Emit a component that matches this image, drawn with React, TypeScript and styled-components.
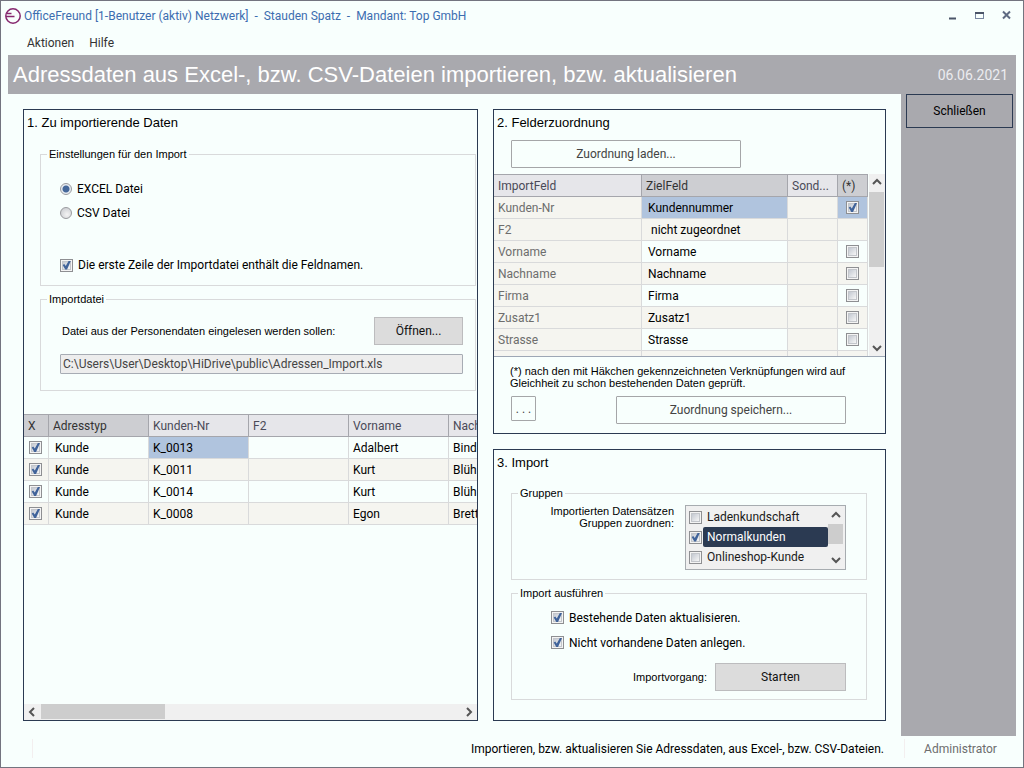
import React from "react";
import styled, { createGlobalStyle } from "styled-components";

const ui = `Roboto, "Open Sans", "Noto Sans", sans-serif`;
const sans = `"Liberation Sans", Arial, sans-serif`;

const c = {
  page: "#f8fffd",
  navy: "#2b3a52",
  band: "#a9a9ae",
  line: "#d9dadb",
  cell: "#f5f5f0",
  head: "#e6e6ea",
  headDark: "#cdced2",
  headLine: "#a5a6ac",
  select: "#b0c4de",
};

const Global = createGlobalStyle`
  *, *::before, *::after { box-sizing: border-box; }
  body { margin: 0; background: ${c.page}; color: #000; font: 12px/16px ${ui}; }
  button, input { font: inherit; }
`;

const Window = styled.div`
  display: flex;
  flex-direction: column;
  min-height: 100vh;
  border: 1px solid #73747f;
  background: ${c.page};
`;

const TitleBar = styled.header`
  display: flex;
  align-items: center;
  height: 29px;
  padding: 0 8px 0 4px;
  color: #3c6db0;
  white-space: pre;
`;

const Title = styled.span`
  flex: 1;
  padding-left: 3px;
`;

const WindowButtons = styled.div`
  display: flex;
  gap: 11px;
`;

const WindowButton = styled.button`
  display: flex;
  width: 16px;
  height: 16px;
  padding: 0;
  border: 0;
  background: none;
`;

const MenuBar = styled.nav`
  display: flex;
  gap: 15px;
  height: 25px;
  padding: 0 26px;
  align-items: center;
`;

const MenuLink = styled.a`
  color: #333;
  text-decoration: none;
`;

const Banner = styled.div`
  display: flex;
  align-items: center;
  justify-content: space-between;
  height: 39px;
  margin: 0 7px;
  padding: 0 8px 0 5px;
  background: ${c.band};
  color: #fff;
`;

const BannerTitle = styled.h1`
  margin: 0;
  font: 22px/24px ${sans};
`;

const BannerDate = styled.time`
  font-size: 14px;
  color: #ececf0;
`;

const Body = styled.div`
  flex: 1;
  display: flex;
  margin: 0 7px;
`;

const Main = styled.main`
  flex: 1;
  min-width: 0;
  display: grid;
  grid-template-columns: minmax(0, 455fr) minmax(0, 393fr);
  gap: 15px;
  padding: 15px;
`;

const Column = styled.div`
  display: flex;
  flex-direction: column;
  gap: 15px;
`;

const Panel = styled.section<{ $grow?: boolean }>`
  display: flex;
  flex-direction: column;
  flex: ${(p) => (p.$grow ? 1 : "none")};
  min-width: 0;
  border: 1px solid ${c.navy};
`;

const PanelTitle = styled.h2`
  margin: 4px 3px 0;
  font: 13px/18px ${sans};
`;

const Sidebar = styled.aside`
  width: 115px;
  padding: 0 3px 0 5px;
  background: ${c.band};
`;

const CloseButton = styled.button`
  width: 100%;
  height: 34px;
  border: 1px solid ${c.navy};
  background: transparent;
  color: #000;
`;

const Button = styled.button<{ $filled?: boolean; $width: number; $height?: number }>`
  flex: none;
  width: ${(p) => p.$width}px;
  height: ${(p) => p.$height ?? 28}px;
  padding: 0;
  border: 1px solid ${(p) => (p.$filled ? "#bcbcbe" : "#a5a6a8")};
  border-radius: ${(p) => (p.$filled ? 0 : 1)}px;
  background: ${(p) => (p.$filled ? "#dcdcdc" : "transparent")};
  color: ${(p) => (p.$filled ? "#111" : "#444")};
`;

const Group = styled.fieldset<{ $margin: string }>`
  min-width: 0;
  margin: ${(p) => p.$margin};
  padding: 0;
  border: 1px solid ${c.line};
`;

const Legend = styled.legend`
  margin-left: 6px;
  padding: 0 2px;
  font: 11px/14px ${sans};
`;

const Caption = styled.label<{ $right?: boolean }>`
  font: 11px/12px ${sans};
  text-align: ${(p) => (p.$right ? "right" : "left")};
`;

const Note = styled.p`
  margin: 8px 17px 0 16px;
  font: 11px/12px ${sans};
`;

const Option = styled.label<{ $height: number }>`
  display: flex;
  align-items: center;
  gap: 5px;
  height: ${(p) => p.$height}px;
`;

const Radio = styled.input`
  appearance: none;
  flex: none;
  width: 12px;
  height: 12px;
  margin: 0;
  border: 1px solid #9a9b9f;
  border-radius: 50%;
  background: radial-gradient(circle at 60% 65%, #f4f4f4, #c4c7cb);
  &:checked {
    background: radial-gradient(circle, #45689a 0 3px, #e8edf2 4px);
  }
`;

const Check = styled.input`
  appearance: none;
  flex: none;
  display: grid;
  place-items: center;
  width: 13px;
  height: 13px;
  margin: 0;
  border: 1px solid #8e8f92;
  background:
    linear-gradient(135deg, #c4c9d2, #f6f6f6) center / 7px 7px no-repeat,
    linear-gradient(#c3c6cb, #c3c6cb) center / 9px 9px no-repeat,
    #f4f4f4;
  &:checked::before {
    content: "";
    width: 9px;
    height: 9px;
    background: #40639a;
    clip-path: polygon(8% 50%, 25% 40%, 42% 62%, 76% 0, 100% 0, 56% 100%, 36% 100%);
  }
`;

const Stack = styled.div<{ $pad: string; $gap?: number }>`
  display: flex;
  flex-direction: column;
  gap: ${(p) => p.$gap ?? 0}px;
  padding: ${(p) => p.$pad};
`;

const Row = styled.div<{ $pad?: string; $gap?: number; $justify?: string; $align?: string }>`
  display: flex;
  align-items: ${(p) => p.$align ?? "center"};
  justify-content: ${(p) => p.$justify ?? "space-between"};
  gap: ${(p) => p.$gap ?? 0}px;
  padding: ${(p) => p.$pad ?? "0"};
`;

const PathInput = styled.input`
  width: 100%;
  height: 20px;
  padding: 0 2px;
  border: 1px solid #a7acb4;
  border-radius: 1px;
  background: #ededed;
  color: #444;
`;

const DataArea = styled.div`
  flex: 1;
  overflow: hidden;
  margin-top: 23px;
`;

const Grid = styled.table<{ $width: string }>`
  width: ${(p) => p.$width};
  table-layout: fixed;
  border-collapse: separate;
  border-spacing: 0;
`;

const Th = styled.th<{ $dark?: boolean }>`
  height: 23px;
  padding: 0 0 0 4px;
  border: solid ${c.headLine};
  border-width: 1px 1px 1px 0;
  background: ${(p) => (p.$dark ? c.headDark : c.head)};
  color: ${(p) => (p.$dark ? "#333" : "#4a4a58")};
  font-weight: 400;
  text-align: left;
  white-space: nowrap;
  overflow: hidden;
`;

const Td = styled.td<{ $tone?: "alt" | "select"; $muted?: boolean; $indent?: number }>`
  height: 22px;
  padding: 0 0 0 ${(p) => p.$indent ?? 4}px;
  border: solid ${c.line};
  border-width: 0 1px 1px 0;
  background: ${(p) => (p.$tone === "select" ? c.select : p.$tone === "alt" ? c.cell : c.page)};
  color: ${(p) => (p.$muted ? "#6d6d6d" : "#000")};
  white-space: nowrap;
  overflow: hidden;
`;

const Center = styled.div`
  display: flex;
  justify-content: center;
`;

const HScroll = styled.div`
  display: flex;
  align-items: flex-start;
  gap: 1px;
  height: 16px;
  background: #f0f0f0;
`;

const HThumb = styled.div`
  width: 124px;
  height: 15px;
  margin-right: auto;
  background: #cdcdcd;
`;

const MappingArea = styled.div`
  display: flex;
  gap: 1px;
  height: 183px;
  margin-top: 6px;
  border-bottom: 1px solid #9da7b5;
  overflow: hidden;
`;

const MappingTable = styled.div`
  flex: 1;
  min-width: 0;
`;

const VScroll = styled.div<{ $thumb: number; $thumbHeight: number }>`
  flex: none;
  display: flex;
  flex-direction: column;
  justify-content: space-between;
  width: 16px;
  background:
    linear-gradient(#cdcdcd, #cdcdcd) 0 ${(p) => p.$thumb}px / 15px ${(p) => p.$thumbHeight}px no-repeat,
    #f0f0f0;
`;

const Arrow = styled.svg`
  flex: none;
  display: block;
  width: 16px;
  height: 16px;
  fill: none;
  stroke: #555;
  stroke-width: 2;
`;

const ListBox = styled.div`
  display: flex;
  width: 161px;
  height: 65px;
  padding: 1px;
  border: 1px solid #a7acb0;
  background: #f0f0f0;
`;

const ListRows = styled.div`
  flex: 1;
  padding-left: 2px;
`;

const ListItem = styled.label`
  display: flex;
  align-items: center;
  gap: 1px;
  height: 20px;
`;

const ListText = styled.span<{ $active?: boolean }>`
  flex: 1;
  height: 20px;
  padding: 2px 4px;
  border-radius: 2px;
  background: ${(p) => (p.$active ? c.navy : "transparent")};
  color: ${(p) => (p.$active ? "#fff" : "#1a1a1a")};
`;

const StatusBar = styled.footer`
  display: flex;
  align-items: center;
  height: 31px;
  padding: 0 7px 6px 31px;
`;

const StatusCell = styled.div<{ $align: string; $width?: number }>`
  flex: ${(p) => (p.$width ? `0 0 ${p.$width}px` : "1")};
  height: 19px;
  padding: 2px 20px 0 5px;
  border-left: 1px solid #f3efef;
  text-align: ${(p) => p.$align};
  white-space: nowrap;
`;

const UserCell = styled(StatusCell)`
  padding: 2px 0 0;
  color: #6d6d6d;
`;

const arrows = {
  up: "M4 10 L8 6 L12 10",
  down: "M4 6 L8 10 L12 6",
  left: "M10 4 L6 8 L10 12",
  right: "M6 4 L10 8 L6 12",
};

const ScrollArrow = ({ dir }: { dir: keyof typeof arrows }) => (
  <Arrow viewBox="0 0 16 16" aria-hidden="true">
    <path d={arrows[dir]} />
  </Arrow>
);

const people = [
  ["K_0013", "Adalbert", "Bind"],
  ["K_0011", "Kurt", "Blüh"],
  ["K_0014", "Kurt", "Blüh"],
  ["K_0008", "Egon", "Brett"],
];

const mappings = [
  ["Kunden-Nr", "Kundennummer"],
  ["F2", "nicht zugeordnet"],
  ["Vorname", "Vorname"],
  ["Nachname", "Nachname"],
  ["Firma", "Firma"],
  ["Zusatz1", "Zusatz1"],
  ["Strasse", "Strasse"],
];

const groups = ["Ladenkundschaft", "Normalkunden", "Onlineshop-Kunde"];

export default function App() {
  return (
    <>
      <Global />
      <Window>
        <TitleBar>
          <svg width="16" height="16" viewBox="0 0 16 16" fill="none" stroke="#86286f" aria-hidden="true">
            <circle cx="8" cy="8" r="7.2" strokeWidth="1.5" />
            <path d="M2 5.5H6.5M1 8.5H9.5" strokeWidth="1.4" />
          </svg>
          <Title>{"OfficeFreund [1-Benutzer (aktiv) Netzwerk]  -  Stauden Spatz  -  Mandant: Top GmbH"}</Title>
          <WindowButtons>
            <WindowButton aria-label="Minimieren">
              <svg width="16" height="16" aria-hidden="true">
                <path d="M4 10.5H11" stroke="#4b5568" strokeWidth="2" />
              </svg>
            </WindowButton>
            <WindowButton aria-label="Maximieren">
              <svg width="16" height="16" aria-hidden="true">
                <rect x="3.5" y="4.5" width="8" height="6" fill="none" stroke="#7886a0" />
                <path d="M3 5H12" stroke="#4b5568" strokeWidth="2" />
              </svg>
            </WindowButton>
            <WindowButton aria-label="Fenster schließen">
              <svg width="16" height="16" aria-hidden="true">
                <path d="M4 3.5L11 10.5M11 3.5L4 10.5" stroke="#5f6b82" strokeWidth="2" />
              </svg>
            </WindowButton>
          </WindowButtons>
        </TitleBar>
        <MenuBar>
          <MenuLink href="#aktionen">Aktionen</MenuLink>
          <MenuLink href="#hilfe">Hilfe</MenuLink>
        </MenuBar>
        <Banner>
          <BannerTitle>Adressdaten aus Excel-, bzw. CSV-Dateien importieren, bzw. aktualisieren</BannerTitle>
          <BannerDate>06.06.2021</BannerDate>
        </Banner>
        <Body>
          <Main>
            <Panel>
              <PanelTitle>1. Zu importierende Daten</PanelTitle>
              <Group $margin="15px 1px 0 16px">
                <Legend>Einstellungen für den Import</Legend>
                <Stack $pad="16px 0 8px 19px">
                  <Option $height={24}>
                    <Radio type="radio" name="format" defaultChecked />
                    EXCEL Datei
                  </Option>
                  <Option $height={24}>
                    <Radio type="radio" name="format" />
                    CSV Datei
                  </Option>
                  <Stack $pad="28px 0 0">
                    <Option $height={24}>
                      <Check type="checkbox" defaultChecked />
                      Die erste Zeile der Importdatei enthält die Feldnamen.
                    </Option>
                  </Stack>
                </Stack>
              </Group>
              <Group $margin="6px 1px 0 16px">
                <Legend>Importdatei</Legend>
                <Stack $pad="11px 12px 16px 19px" $gap={9}>
                  <Row $pad="0 0 0 2px">
                    <Caption htmlFor="path">Datei aus der Personendaten eingelesen werden sollen:</Caption>
                    <Button $filled $width={89}>Öffnen...</Button>
                  </Row>
                  <PathInput id="path" readOnly value="C:\Users\User\Desktop\HiDrive\public\Adressen_Import.xls" />
                </Stack>
              </Group>
              <DataArea>
                <Grid $width="max(525px, 100%)">
                  <colgroup>
                    <col style={{ width: 25 }} />
                    <col style={{ width: 100 }} />
                    <col style={{ width: 100 }} />
                    <col style={{ width: 100 }} />
                    <col style={{ width: 100 }} />
                    <col />
                  </colgroup>
                  <thead>
                    <tr>
                      <Th $dark>X</Th>
                      <Th $dark>Adresstyp</Th>
                      <Th>Kunden-Nr</Th>
                      <Th>F2</Th>
                      <Th>Vorname</Th>
                      <Th>Nach</Th>
                    </tr>
                  </thead>
                  <tbody>
                    {people.map(([nr, first, last], i) => {
                      const tone = i % 2 ? "alt" : undefined;
                      return (
                        <tr key={nr}>
                          <Td $tone={tone} $indent={5}>
                            <Check type="checkbox" defaultChecked aria-label={nr} />
                          </Td>
                          <Td $tone={tone} $indent={6}>Kunde</Td>
                          <Td $tone={i === 0 ? "select" : tone}>{nr}</Td>
                          <Td $tone={tone} />
                          <Td $tone={tone}>{first}</Td>
                          <Td $tone={tone}>{last}</Td>
                        </tr>
                      );
                    })}
                  </tbody>
                </Grid>
              </DataArea>
              <HScroll>
                <ScrollArrow dir="left" />
                <HThumb />
                <ScrollArrow dir="right" />
              </HScroll>
            </Panel>
            <Column>
              <Panel>
                <PanelTitle>2. Felderzuordnung</PanelTitle>
                <Row $pad="8px 17px 0" $justify="flex-start">
                  <Button $width={230}>Zuordnung laden...</Button>
                </Row>
                <MappingArea>
                  <MappingTable>
                    <Grid $width="100%">
                      <colgroup>
                        <col />
                        <col style={{ width: 146 }} />
                        <col style={{ width: 50 }} />
                        <col style={{ width: 30 }} />
                      </colgroup>
                      <thead>
                        <tr>
                          <Th>ImportFeld</Th>
                          <Th $dark>ZielFeld</Th>
                          <Th>Sond...</Th>
                          <Th $dark>(*)</Th>
                        </tr>
                      </thead>
                      <tbody>
                        {mappings.map(([from, to], i) => {
                          const tone = i === 0 ? "select" : i % 2 ? "alt" : undefined;
                          return (
                            <tr key={from}>
                              <Td $tone="alt" $muted>{from}</Td>
                              <Td $tone={tone} $indent={i === 1 ? 9 : 6}>{to}</Td>
                              <Td $tone="alt" />
                              <Td $tone={tone} $indent={0}>
                                {i !== 1 && (
                                  <Center>
                                    <Check type="checkbox" defaultChecked={i === 0} aria-label={from} />
                                  </Center>
                                )}
                              </Td>
                            </tr>
                          );
                        })}
                        <tr>
                          <Td $tone="alt" />
                          <Td $tone="alt" />
                          <Td $tone="alt" />
                          <Td $tone="alt" />
                        </tr>
                      </tbody>
                    </Grid>
                  </MappingTable>
                  <VScroll $thumb={18} $thumbHeight={75}>
                    <ScrollArrow dir="up" />
                    <ScrollArrow dir="down" />
                  </VScroll>
                </MappingArea>
                <Note>
                  (*) nach den mit Häkchen gekennzeichneten Verknüpfungen wird auf Gleichheit zu schon bestehenden
                  Daten geprüft.
                </Note>
                <Row $pad="7px 39px 9px 17px" $align="flex-start">
                  <Button $width={25} $height={25}>. . .</Button>
                  <Button $width={230}>Zuordnung speichern...</Button>
                </Row>
              </Panel>
              <Panel $grow>
                <PanelTitle>3. Import</PanelTitle>
                <Group $margin="14px 18px 0 17px">
                  <Legend>Gruppen</Legend>
                  <Row $pad="5px 20px 9px" $gap={11} $justify="flex-end" $align="flex-start">
                    <Caption as="span" $right>
                      Importierten Datensätzen
                      <br />
                      Gruppen zuordnen:
                    </Caption>
                    <ListBox role="group" aria-label="Gruppen">
                      <ListRows>
                        {groups.map((name, i) => (
                          <ListItem key={name}>
                            <Check type="checkbox" defaultChecked={i === 1} />
                            <ListText $active={i === 1}>{name}</ListText>
                          </ListItem>
                        ))}
                      </ListRows>
                      <VScroll $thumb={17} $thumbHeight={20}>
                        <ScrollArrow dir="up" />
                        <ScrollArrow dir="down" />
                      </VScroll>
                    </ListBox>
                  </Row>
                </Group>
                <Group $margin="6px 18px 0 17px">
                  <Legend>Import ausführen</Legend>
                  <Stack $pad="5px 20px 8px 39px">
                    <Option $height={25}>
                      <Check type="checkbox" defaultChecked />
                      Bestehende Daten aktualisieren.
                    </Option>
                    <Option $height={25}>
                      <Check type="checkbox" defaultChecked />
                      Nicht vorhandene Daten anlegen.
                    </Option>
                    <Row $pad="8px 0 0" $gap={8} $justify="flex-end">
                      <Caption htmlFor="start">Importvorgang:</Caption>
                      <Button id="start" $filled $width={131}>Starten</Button>
                    </Row>
                  </Stack>
                </Group>
              </Panel>
            </Column>
          </Main>
          <Sidebar>
            <CloseButton>Schließen</CloseButton>
          </Sidebar>
        </Body>
        <StatusBar>
          <StatusCell $align="right">
            Importieren, bzw. aktualisieren Sie Adressdaten, aus Excel-, bzw. CSV-Dateien.
          </StatusCell>
          <UserCell $align="center" $width={112}>Administrator</UserCell>
        </StatusBar>
      </Window>
    </>
  );
}
